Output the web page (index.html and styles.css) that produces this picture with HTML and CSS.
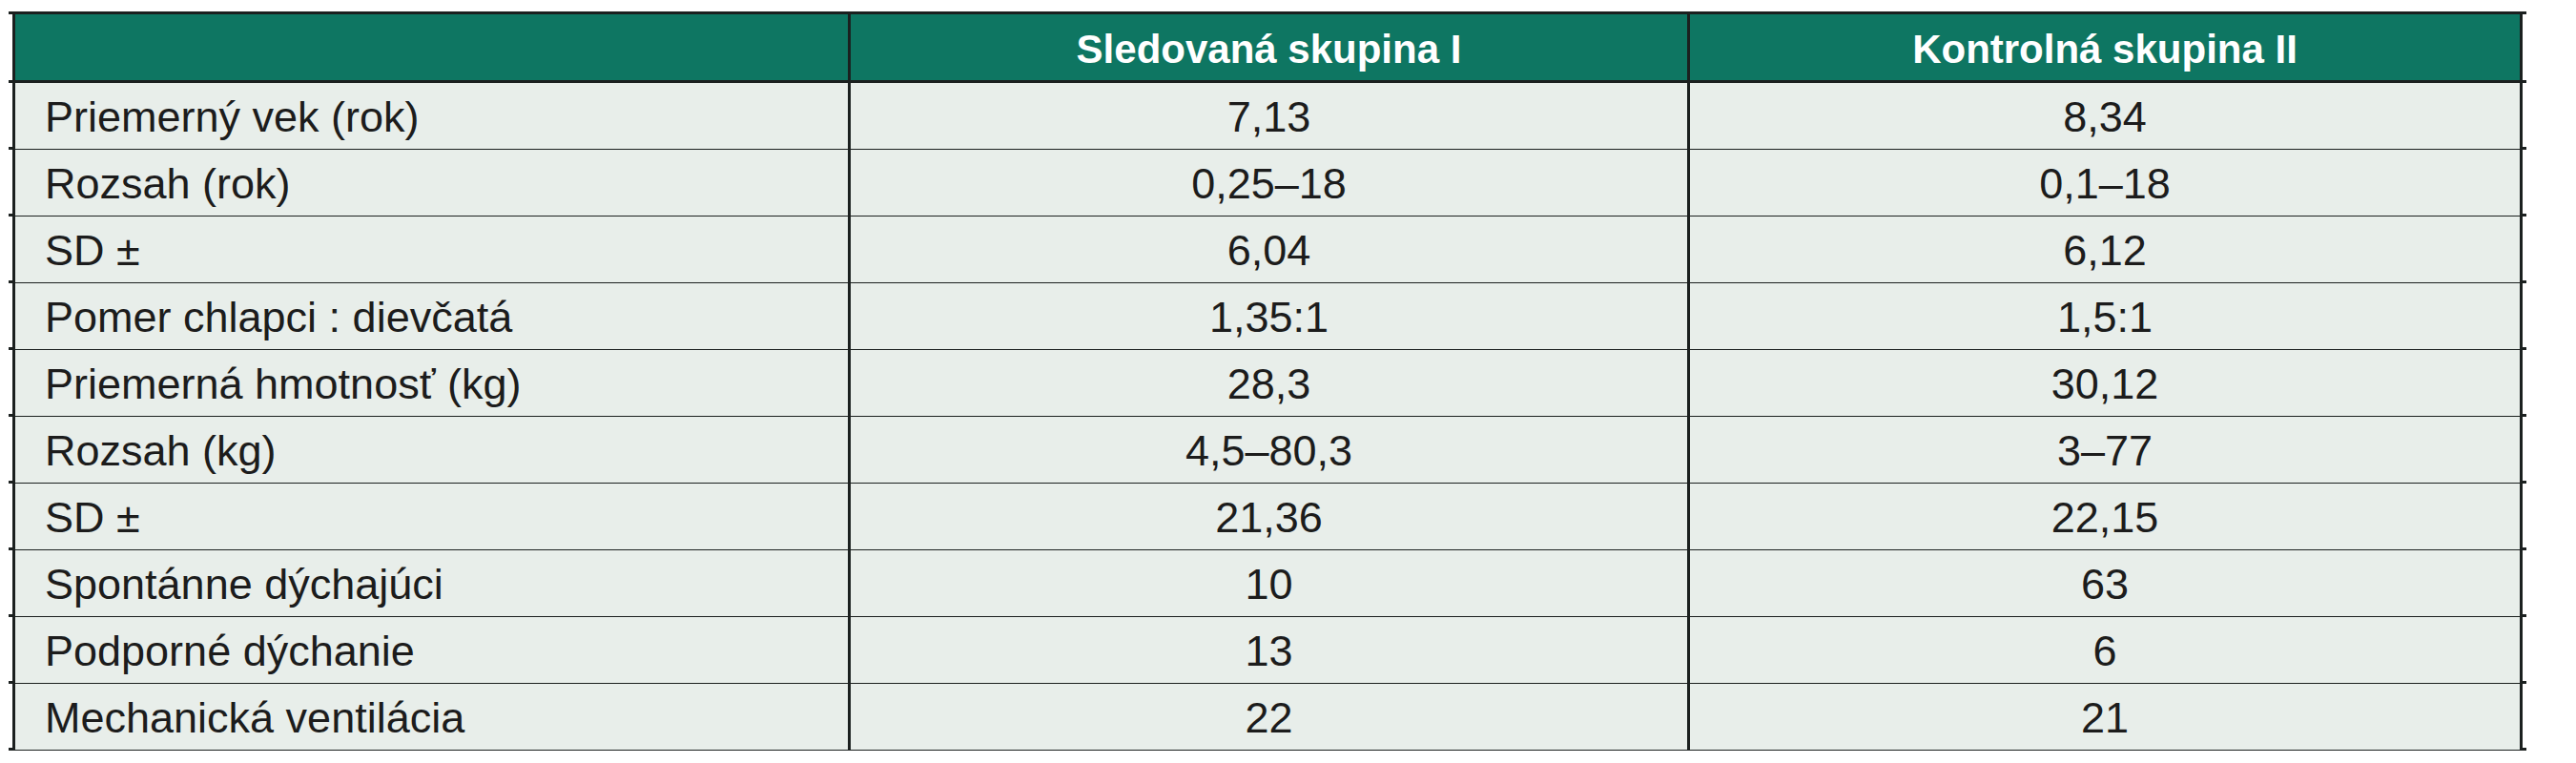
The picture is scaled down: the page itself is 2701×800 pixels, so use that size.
FILE: index.html
```html
<!DOCTYPE html>
<html lang="sk">
<head>
<meta charset="utf-8">
<title>Tabuľka</title>
<link rel="stylesheet" href="styles.css">
</head>
<body>
<div class="table">
  <div class="row head">
    <div class="cell label"></div>
    <div class="cell">Sledovaná skupina I</div>
    <div class="cell last">Kontrolná skupina II</div>
  </div>
  <div class="row"><div class="cell label">Priemerný vek (rok)</div><div class="cell">7,13</div><div class="cell last">8,34</div></div>
  <div class="row"><div class="cell label">Rozsah (rok)</div><div class="cell">0,25–18</div><div class="cell last">0,1–18</div></div>
  <div class="row"><div class="cell label">SD ±</div><div class="cell">6,04</div><div class="cell last">6,12</div></div>
  <div class="row"><div class="cell label">Pomer chlapci : dievčatá</div><div class="cell">1,35:1</div><div class="cell last">1,5:1</div></div>
  <div class="row"><div class="cell label">Priemerná hmotnosť (kg)</div><div class="cell">28,3</div><div class="cell last">30,12</div></div>
  <div class="row"><div class="cell label">Rozsah (kg)</div><div class="cell">4,5–80,3</div><div class="cell last">3–77</div></div>
  <div class="row"><div class="cell label">SD ±</div><div class="cell">21,36</div><div class="cell last">22,15</div></div>
  <div class="row"><div class="cell label">Spontánne dýchajúci</div><div class="cell">10</div><div class="cell last">63</div></div>
  <div class="row"><div class="cell label">Podporné dýchanie</div><div class="cell">13</div><div class="cell last">6</div></div>
  <div class="row"><div class="cell label">Mechanická ventilácia</div><div class="cell">22</div><div class="cell last">21</div></div>
</div>
</body>
</html>
```

FILE: styles.css
```css
html, body {
  margin: 0;
  padding: 0;
  background: #ffffff;
}

body {
  font-family: "Liberation Sans", Arial, sans-serif;
  color: #1c1c1c;
}

.table {
  margin: 12px 0 0 9px;
  width: 2640px;
  border-top: 3px solid #1b201f;
}

.row {
  display: grid;
  grid-template-columns: 876px 880px 876px;
  padding: 0 4px;
  height: 70px;
  box-sizing: border-box;
  border-bottom: 3px solid #1b201f;
}

.row.head {
  height: 72px;
}

.cell {
  box-sizing: border-box;
  border-left: 3px solid #1b201f;
  background: #e8eeea;
  font-size: 45px;
  line-height: 67px;
  padding-top: 2px;
  text-align: center;
  white-space: nowrap;
}

.cell.last {
  border-right: 3px solid #1b201f;
}

.cell.label {
  text-align: left;
  padding-left: 31px;
}

.head .cell {
  background: #0e7662;
  color: #ffffff;
  font-weight: bold;
  font-size: 42px;
  line-height: 65px;
  padding-top: 4px;
}
```
